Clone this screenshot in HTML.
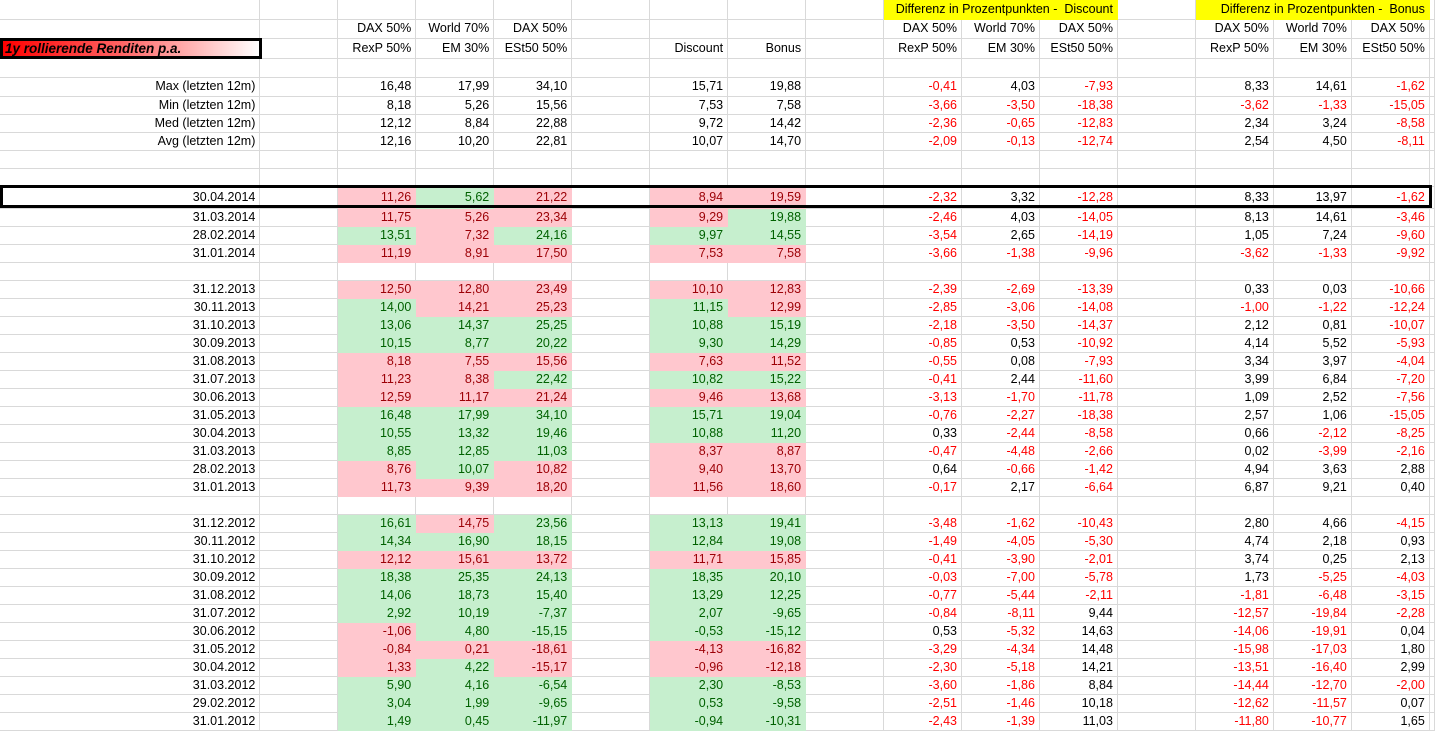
<!DOCTYPE html>
<html><head><meta charset="utf-8"><style>
*{margin:0;padding:0}
body{width:1435px;height:733px;overflow:hidden;background:#fff;font-family:"Liberation Sans",Arial,sans-serif;font-size:12.5px;position:relative}
table{border-collapse:collapse;table-layout:fixed;position:absolute;left:0;top:0}
td{border-right:1px solid #d9d9d9;border-bottom:1px solid #d9d9d9;text-align:right;padding:0 4px 0 0;white-space:nowrap;overflow:hidden;height:17px;line-height:17px;color:#000}
td.p{background:#FFC7CE;color:#9C0006;border-color:#FFC7CE}
td.g{background:#C6EFCE;color:#006100;border-color:#C6EFCE}
td.r{color:#f00}
td.y{background:#ff0;border-color:#ff0}
.box{position:absolute;border:3px solid #000;box-sizing:border-box}
.lbl{left:0;top:38px;width:262px;height:21px;background:linear-gradient(90deg,#f00 0%,#ff6060 45%,#fff 100%);font-weight:bold;font-style:italic;font-size:13.5px;line-height:15px;padding-left:2px}
</style></head><body>
<table>
<colgroup><col style="width:260px"><col style="width:78px"><col style="width:78px"><col style="width:78px"><col style="width:78px"><col style="width:78px"><col style="width:78px"><col style="width:78px"><col style="width:78px"><col style="width:78px"><col style="width:78px"><col style="width:78px"><col style="width:78px"><col style="width:78px"><col style="width:78px"><col style="width:78px"><col style="width:5px"></colgroup>
<tr style="height:19px"><td></td><td></td><td></td><td></td><td></td><td></td><td></td><td></td><td></td><td class="y" colspan="3">Differenz in Prozentpunkten -&nbsp; Discount</td><td></td><td class="y" colspan="3">Differenz in Prozentpunkten -&nbsp; Bonus</td><td></td></tr>
<tr style="height:19px"><td></td><td></td><td>DAX 50%</td><td>World 70%</td><td>DAX 50%</td><td></td><td></td><td></td><td></td><td>DAX 50%</td><td>World 70%</td><td>DAX 50%</td><td></td><td>DAX 50%</td><td>World 70%</td><td>DAX 50%</td><td></td></tr>
<tr style="height:20px"><td></td><td></td><td>RexP 50%</td><td>EM 30%</td><td>ESt50 50%</td><td></td><td>Discount</td><td>Bonus</td><td></td><td>RexP 50%</td><td>EM 30%</td><td>ESt50 50%</td><td></td><td>RexP 50%</td><td>EM 30%</td><td>ESt50 50%</td><td></td></tr>
<tr style="height:19px"><td></td><td></td><td></td><td></td><td></td><td></td><td></td><td></td><td></td><td></td><td></td><td></td><td></td><td></td><td></td><td></td><td></td></tr>
<tr style="height:19px"><td>Max (letzten 12m)</td><td></td><td>16,48</td><td>17,99</td><td>34,10</td><td></td><td>15,71</td><td>19,88</td><td></td><td class="r">-0,41</td><td>4,03</td><td class="r">-7,93</td><td></td><td>8,33</td><td>14,61</td><td class="r">-1,62</td><td></td></tr>
<tr style="height:18px"><td>Min (letzten 12m)</td><td></td><td>8,18</td><td>5,26</td><td>15,56</td><td></td><td>7,53</td><td>7,58</td><td></td><td class="r">-3,66</td><td class="r">-3,50</td><td class="r">-18,38</td><td></td><td class="r">-3,62</td><td class="r">-1,33</td><td class="r">-15,05</td><td></td></tr>
<tr style="height:18px"><td>Med (letzten 12m)</td><td></td><td>12,12</td><td>8,84</td><td>22,88</td><td></td><td>9,72</td><td>14,42</td><td></td><td class="r">-2,36</td><td class="r">-0,65</td><td class="r">-12,83</td><td></td><td>2,34</td><td>3,24</td><td class="r">-8,58</td><td></td></tr>
<tr style="height:18px"><td>Avg (letzten 12m)</td><td></td><td>12,16</td><td>10,20</td><td>22,81</td><td></td><td>10,07</td><td>14,70</td><td></td><td class="r">-2,09</td><td class="r">-0,13</td><td class="r">-12,74</td><td></td><td>2,54</td><td>4,50</td><td class="r">-8,11</td><td></td></tr>
<tr style="height:17px"><td></td><td></td><td></td><td></td><td></td><td></td><td></td><td></td><td></td><td></td><td></td><td></td><td></td><td></td><td></td><td></td><td></td></tr>
<tr style="height:18px"><td></td><td></td><td></td><td></td><td></td><td></td><td></td><td></td><td></td><td></td><td></td><td></td><td></td><td></td><td></td><td></td><td></td></tr>
<tr style="height:22px"><td>30.04.2014</td><td></td><td class="p">11,26</td><td class="g">5,62</td><td class="p">21,22</td><td></td><td class="p">8,94</td><td class="p">19,59</td><td></td><td class="r">-2,32</td><td>3,32</td><td class="r">-12,28</td><td></td><td>8,33</td><td>13,97</td><td class="r">-1,62</td><td></td></tr>
<tr style="height:18px"><td>31.03.2014</td><td></td><td class="p">11,75</td><td class="p">5,26</td><td class="p">23,34</td><td></td><td class="p">9,29</td><td class="g">19,88</td><td></td><td class="r">-2,46</td><td>4,03</td><td class="r">-14,05</td><td></td><td>8,13</td><td>14,61</td><td class="r">-3,46</td><td></td></tr>
<tr style="height:18px"><td>28.02.2014</td><td></td><td class="g">13,51</td><td class="p">7,32</td><td class="g">24,16</td><td></td><td class="g">9,97</td><td class="g">14,55</td><td></td><td class="r">-3,54</td><td>2,65</td><td class="r">-14,19</td><td></td><td>1,05</td><td>7,24</td><td class="r">-9,60</td><td></td></tr>
<tr style="height:18px"><td>31.01.2014</td><td></td><td class="p">11,19</td><td class="p">8,91</td><td class="p">17,50</td><td></td><td class="p">7,53</td><td class="p">7,58</td><td></td><td class="r">-3,66</td><td class="r">-1,38</td><td class="r">-9,96</td><td></td><td class="r">-3,62</td><td class="r">-1,33</td><td class="r">-9,92</td><td></td></tr>
<tr style="height:18px"><td></td><td></td><td></td><td></td><td></td><td></td><td></td><td></td><td></td><td></td><td></td><td></td><td></td><td></td><td></td><td></td><td></td></tr>
<tr style="height:18px"><td>31.12.2013</td><td></td><td class="p">12,50</td><td class="p">12,80</td><td class="p">23,49</td><td></td><td class="p">10,10</td><td class="p">12,83</td><td></td><td class="r">-2,39</td><td class="r">-2,69</td><td class="r">-13,39</td><td></td><td>0,33</td><td>0,03</td><td class="r">-10,66</td><td></td></tr>
<tr style="height:18px"><td>30.11.2013</td><td></td><td class="g">14,00</td><td class="p">14,21</td><td class="p">25,23</td><td></td><td class="g">11,15</td><td class="p">12,99</td><td></td><td class="r">-2,85</td><td class="r">-3,06</td><td class="r">-14,08</td><td></td><td class="r">-1,00</td><td class="r">-1,22</td><td class="r">-12,24</td><td></td></tr>
<tr style="height:18px"><td>31.10.2013</td><td></td><td class="g">13,06</td><td class="g">14,37</td><td class="g">25,25</td><td></td><td class="g">10,88</td><td class="g">15,19</td><td></td><td class="r">-2,18</td><td class="r">-3,50</td><td class="r">-14,37</td><td></td><td>2,12</td><td>0,81</td><td class="r">-10,07</td><td></td></tr>
<tr style="height:18px"><td>30.09.2013</td><td></td><td class="g">10,15</td><td class="g">8,77</td><td class="g">20,22</td><td></td><td class="g">9,30</td><td class="g">14,29</td><td></td><td class="r">-0,85</td><td>0,53</td><td class="r">-10,92</td><td></td><td>4,14</td><td>5,52</td><td class="r">-5,93</td><td></td></tr>
<tr style="height:18px"><td>31.08.2013</td><td></td><td class="p">8,18</td><td class="p">7,55</td><td class="p">15,56</td><td></td><td class="p">7,63</td><td class="p">11,52</td><td></td><td class="r">-0,55</td><td>0,08</td><td class="r">-7,93</td><td></td><td>3,34</td><td>3,97</td><td class="r">-4,04</td><td></td></tr>
<tr style="height:18px"><td>31.07.2013</td><td></td><td class="p">11,23</td><td class="p">8,38</td><td class="g">22,42</td><td></td><td class="g">10,82</td><td class="g">15,22</td><td></td><td class="r">-0,41</td><td>2,44</td><td class="r">-11,60</td><td></td><td>3,99</td><td>6,84</td><td class="r">-7,20</td><td></td></tr>
<tr style="height:18px"><td>30.06.2013</td><td></td><td class="p">12,59</td><td class="p">11,17</td><td class="p">21,24</td><td></td><td class="p">9,46</td><td class="p">13,68</td><td></td><td class="r">-3,13</td><td class="r">-1,70</td><td class="r">-11,78</td><td></td><td>1,09</td><td>2,52</td><td class="r">-7,56</td><td></td></tr>
<tr style="height:18px"><td>31.05.2013</td><td></td><td class="g">16,48</td><td class="g">17,99</td><td class="g">34,10</td><td></td><td class="g">15,71</td><td class="g">19,04</td><td></td><td class="r">-0,76</td><td class="r">-2,27</td><td class="r">-18,38</td><td></td><td>2,57</td><td>1,06</td><td class="r">-15,05</td><td></td></tr>
<tr style="height:18px"><td>30.04.2013</td><td></td><td class="g">10,55</td><td class="g">13,32</td><td class="g">19,46</td><td></td><td class="g">10,88</td><td class="g">11,20</td><td></td><td>0,33</td><td class="r">-2,44</td><td class="r">-8,58</td><td></td><td>0,66</td><td class="r">-2,12</td><td class="r">-8,25</td><td></td></tr>
<tr style="height:18px"><td>31.03.2013</td><td></td><td class="g">8,85</td><td class="g">12,85</td><td class="g">11,03</td><td></td><td class="p">8,37</td><td class="p">8,87</td><td></td><td class="r">-0,47</td><td class="r">-4,48</td><td class="r">-2,66</td><td></td><td>0,02</td><td class="r">-3,99</td><td class="r">-2,16</td><td></td></tr>
<tr style="height:18px"><td>28.02.2013</td><td></td><td class="p">8,76</td><td class="g">10,07</td><td class="p">10,82</td><td></td><td class="p">9,40</td><td class="p">13,70</td><td></td><td>0,64</td><td class="r">-0,66</td><td class="r">-1,42</td><td></td><td>4,94</td><td>3,63</td><td>2,88</td><td></td></tr>
<tr style="height:18px"><td>31.01.2013</td><td></td><td class="p">11,73</td><td class="p">9,39</td><td class="p">18,20</td><td></td><td class="p">11,56</td><td class="p">18,60</td><td></td><td class="r">-0,17</td><td>2,17</td><td class="r">-6,64</td><td></td><td>6,87</td><td>9,21</td><td>0,40</td><td></td></tr>
<tr style="height:18px"><td></td><td></td><td></td><td></td><td></td><td></td><td></td><td></td><td></td><td></td><td></td><td></td><td></td><td></td><td></td><td></td><td></td></tr>
<tr style="height:18px"><td>31.12.2012</td><td></td><td class="g">16,61</td><td class="p">14,75</td><td class="g">23,56</td><td></td><td class="g">13,13</td><td class="g">19,41</td><td></td><td class="r">-3,48</td><td class="r">-1,62</td><td class="r">-10,43</td><td></td><td>2,80</td><td>4,66</td><td class="r">-4,15</td><td></td></tr>
<tr style="height:18px"><td>30.11.2012</td><td></td><td class="g">14,34</td><td class="g">16,90</td><td class="g">18,15</td><td></td><td class="g">12,84</td><td class="g">19,08</td><td></td><td class="r">-1,49</td><td class="r">-4,05</td><td class="r">-5,30</td><td></td><td>4,74</td><td>2,18</td><td>0,93</td><td></td></tr>
<tr style="height:18px"><td>31.10.2012</td><td></td><td class="p">12,12</td><td class="p">15,61</td><td class="p">13,72</td><td></td><td class="p">11,71</td><td class="p">15,85</td><td></td><td class="r">-0,41</td><td class="r">-3,90</td><td class="r">-2,01</td><td></td><td>3,74</td><td>0,25</td><td>2,13</td><td></td></tr>
<tr style="height:18px"><td>30.09.2012</td><td></td><td class="g">18,38</td><td class="g">25,35</td><td class="g">24,13</td><td></td><td class="g">18,35</td><td class="g">20,10</td><td></td><td class="r">-0,03</td><td class="r">-7,00</td><td class="r">-5,78</td><td></td><td>1,73</td><td class="r">-5,25</td><td class="r">-4,03</td><td></td></tr>
<tr style="height:18px"><td>31.08.2012</td><td></td><td class="g">14,06</td><td class="g">18,73</td><td class="g">15,40</td><td></td><td class="g">13,29</td><td class="g">12,25</td><td></td><td class="r">-0,77</td><td class="r">-5,44</td><td class="r">-2,11</td><td></td><td class="r">-1,81</td><td class="r">-6,48</td><td class="r">-3,15</td><td></td></tr>
<tr style="height:18px"><td>31.07.2012</td><td></td><td class="g">2,92</td><td class="g">10,19</td><td class="g">-7,37</td><td></td><td class="g">2,07</td><td class="g">-9,65</td><td></td><td class="r">-0,84</td><td class="r">-8,11</td><td>9,44</td><td></td><td class="r">-12,57</td><td class="r">-19,84</td><td class="r">-2,28</td><td></td></tr>
<tr style="height:18px"><td>30.06.2012</td><td></td><td class="p">-1,06</td><td class="g">4,80</td><td class="g">-15,15</td><td></td><td class="g">-0,53</td><td class="g">-15,12</td><td></td><td>0,53</td><td class="r">-5,32</td><td>14,63</td><td></td><td class="r">-14,06</td><td class="r">-19,91</td><td>0,04</td><td></td></tr>
<tr style="height:18px"><td>31.05.2012</td><td></td><td class="p">-0,84</td><td class="p">0,21</td><td class="p">-18,61</td><td></td><td class="p">-4,13</td><td class="p">-16,82</td><td></td><td class="r">-3,29</td><td class="r">-4,34</td><td>14,48</td><td></td><td class="r">-15,98</td><td class="r">-17,03</td><td>1,80</td><td></td></tr>
<tr style="height:18px"><td>30.04.2012</td><td></td><td class="p">1,33</td><td class="g">4,22</td><td class="p">-15,17</td><td></td><td class="p">-0,96</td><td class="p">-12,18</td><td></td><td class="r">-2,30</td><td class="r">-5,18</td><td>14,21</td><td></td><td class="r">-13,51</td><td class="r">-16,40</td><td>2,99</td><td></td></tr>
<tr style="height:18px"><td>31.03.2012</td><td></td><td class="g">5,90</td><td class="g">4,16</td><td class="g">-6,54</td><td></td><td class="g">2,30</td><td class="g">-8,53</td><td></td><td class="r">-3,60</td><td class="r">-1,86</td><td>8,84</td><td></td><td class="r">-14,44</td><td class="r">-12,70</td><td class="r">-2,00</td><td></td></tr>
<tr style="height:18px"><td>29.02.2012</td><td></td><td class="g">3,04</td><td class="g">1,99</td><td class="g">-9,65</td><td></td><td class="g">0,53</td><td class="g">-9,58</td><td></td><td class="r">-2,51</td><td class="r">-1,46</td><td>10,18</td><td></td><td class="r">-12,62</td><td class="r">-11,57</td><td>0,07</td><td></td></tr>
<tr style="height:18px"><td>31.01.2012</td><td></td><td class="g">1,49</td><td class="g">0,45</td><td class="g">-11,97</td><td></td><td class="g">-0,94</td><td class="g">-10,31</td><td></td><td class="r">-2,43</td><td class="r">-1,39</td><td>11,03</td><td></td><td class="r">-11,80</td><td class="r">-10,77</td><td>1,65</td><td></td></tr>
</table>
<div class="box lbl">1y rollierende Renditen p.a.</div>
<div class="box" style="left:0;top:185px;width:1432px;height:23px"></div>
</body></html>
